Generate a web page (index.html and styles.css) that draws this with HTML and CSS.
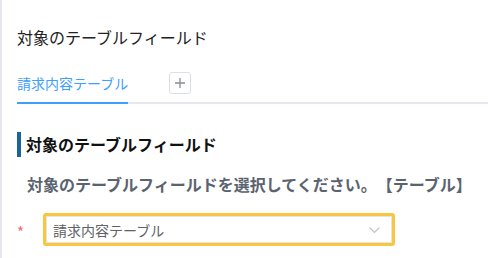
FILE: index.html
```html
<!DOCTYPE html>
<html lang="ja">
<head>
<meta charset="utf-8">
<link rel="stylesheet" href="styles.css">
</head>
<body>
<div class="page">
  <div class="title">対象のテーブルフィールド</div>
  <div class="tabs">
    <div class="tab active">請求内容テーブル</div>
    <div class="add-btn">
      <svg width="12" height="12" viewBox="0 0 12 12"><path d="M6 1v10M1 6h10" stroke="#8a8d93" stroke-width="1.3" fill="none"/></svg>
    </div>
  </div>
  <div class="section-head">対象のテーブルフィールド</div>
  <div class="desc">対象のテーブルフィールドを選択してください。【テーブル】</div>
  <div class="form-row">
    <span class="req">*</span>
    <div class="select">
      <span class="select-text">請求内容テーブル</span>
      <svg class="chev" width="11" height="6" viewBox="0 0 11 6"><path d="M0.5 0.5l5 5 5-5" stroke="#c0c4cc" stroke-width="1.1" fill="none"/></svg>
    </div>
  </div>
</div>
</body>
</html>
```

FILE: styles.css
```css
html, body {
  margin: 0;
  padding: 0;
  background: #fff;
}
body {
  font-family: "Noto Sans CJK JP", "Noto Sans", sans-serif;
  text-spacing-trim: space-all;
  width: 488px;
  height: 258px;
  overflow: hidden;
}
.page {
  border-left: 2px solid #e4e8ec;
  height: 258px;
  box-sizing: border-box;
  padding: 26px 0 0 15px;
}
.title {
  font-size: 16px;
  line-height: 22px;
  color: #222;
}
.tabs {
  margin-top: 16px;
  height: 38px;
  display: flex;
  align-items: center;
  border-bottom: 2px solid #e4e7ed;
}
.tab {
  align-self: flex-start;
  height: 40px;
  line-height: 38px;
  font-size: 14px;
  color: #409eff;
  box-sizing: border-box;
  margin-bottom: -2px;
  border-bottom: 2px solid #409eff;
}
.add-btn {
  margin-left: 41px;
  width: 22px;
  height: 22px;
  box-sizing: border-box;
  border: 1px solid #dcdfe6;
  border-radius: 3px;
  display: flex;
  align-items: center;
  justify-content: center;
}
.section-head {
  margin-top: 28px;
  border-left: 4px solid #1b6499;
  padding-left: 5px;
  font-size: 16px;
  font-weight: bold;
  line-height: 25px;
  color: #111;
}
.desc {
  margin-top: 16px;
  padding-left: 10px;
  font-size: 16px;
  font-weight: bold;
  line-height: 22px;
  color: #5c6370;
}
.form-row {
  margin-top: 18px;
  display: flex;
  align-items: center;
}
.req {
  width: 26px;
  color: #f56c6c;
  font-size: 15px;
  line-height: 15px;
  padding-top: 3px;
}
.select {
  width: 352px;
  height: 33px;
  box-sizing: border-box;
  border: 3px solid #f8c73f;
  border-radius: 3px;
  box-shadow: inset 0 0 0 1px #e4e4e4;
  display: flex;
  align-items: center;
  justify-content: space-between;
  padding: 0 12px 0 7px;
}
.select-text {
  font-size: 14px;
  color: #606266;
}
.chev {
  display: block;
}
```
